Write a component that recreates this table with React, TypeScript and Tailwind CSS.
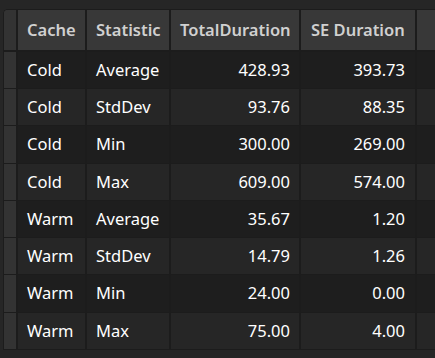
import React from "react";

const rows = [
  ["Cold", "Average", "428.93", "393.73"],
  ["Cold", "StdDev", "93.76", "88.35"],
  ["Cold", "Min", "300.00", "269.00"],
  ["Cold", "Max", "609.00", "574.00"],
  ["Warm", "Average", "35.67", "1.20"],
  ["Warm", "StdDev", "14.79", "1.26"],
  ["Warm", "Min", "24.00", "0.00"],
  ["Warm", "Max", "75.00", "4.00"],
];

const App = () => {
  return (
    <div
      className="w-[435px] h-[358px] overflow-hidden bg-[#262626] pt-[9px] pl-[3px]"
      style={{ fontFamily: '"Noto Sans", "Open Sans", sans-serif' }}
    >
      <div className="w-[460px] rounded-tl-[5px] border-t border-l border-[#1c1c1c] overflow-hidden">
        {/* header */}
        <div className="flex h-[42px] bg-[#383838] border-b-2 border-[#1c1c1c] text-[16.5px] font-semibold text-[#d0d0d0]">
          <div className="w-[14px] shrink-0 bg-[#333333] border-r-2 border-[#1c1c1c]" />
          <div className="w-[69px] shrink-0 pl-[9px] flex items-center border-r-2 border-[#1c1c1c]">Cache</div>
          <div className="w-[84px] shrink-0 pl-[9px] flex items-center border-r-2 border-[#1c1c1c]">Statistic</div>
          <div className="w-[130px] shrink-0 pl-[9px] flex items-center border-r-2 border-[#1c1c1c]">TotalDuration</div>
          <div className="w-[116px] shrink-0 pl-[10px] flex items-center border-r-2 border-[#1c1c1c]">SE Duration</div>
          <div className="flex-1" />
        </div>
        {rows.map((r, i) => (
          <div
            key={i}
            className={
              "flex border-b border-[#1c1c1c] text-[16.5px] text-white " +
              (i === 2 || i === 6 ? "h-[38px] " : "h-[37px] ") +
              (i % 2 === 0 ? "bg-[#1e1e1e]" : "bg-[#262626]")
            }
          >
            <div className="w-[14px] shrink-0 bg-[#333333] border-r-2 border-[#1c1c1c]" />
            <div className="w-[69px] shrink-0 pl-[9px] flex items-center border-r-2 border-[#1c1c1c]">{r[0]}</div>
            <div className="w-[84px] shrink-0 pl-[9px] flex items-center border-r-2 border-[#1c1c1c]">{r[1]}</div>
            <div className="w-[130px] shrink-0 pr-[9px] flex items-center justify-end border-r-2 border-[#1c1c1c]">{r[2]}</div>
            <div className="w-[116px] shrink-0 pr-[10px] flex items-center justify-end border-r-2 border-[#1c1c1c]">{r[3]}</div>
            <div className="flex-1" />
          </div>
        ))}
      </div>
    </div>
  );
};

export default App;
